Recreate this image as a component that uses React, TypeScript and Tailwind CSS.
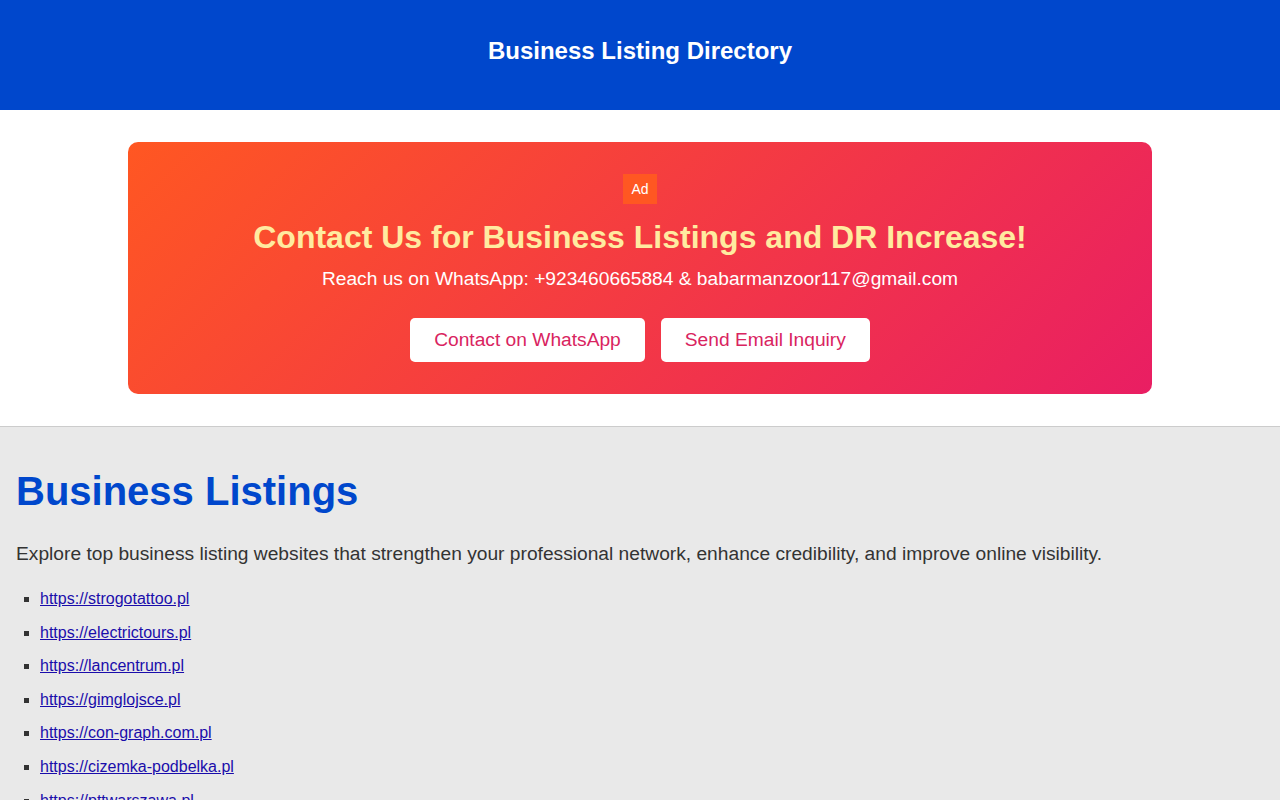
import type { FC } from 'react';

const LISTINGS = [
  'https://strogotattoo.pl',
  'https://electrictours.pl',
  'https://lancentrum.pl',
  'https://gimglojsce.pl',
  'https://con-graph.com.pl',
  'https://cizemka-podbelka.pl',
  'https://pttwarszawa.pl',
  'https://example-listing.pl',
];

const App: FC = () => {
  return (
    <div className="min-h-screen bg-[#e9e9e9] font-['Liberation_Sans',Arial,sans-serif] text-[#333]">
      <header className="flex h-[110px] items-center justify-center bg-[#0047cc] pb-[8px]">
        <h1 className="text-[24px] font-bold leading-[28px] text-white">Business Listing Directory</h1>
      </header>

      <section className="border-b border-[#cccccc] bg-white py-8">
        <div className="mx-auto flex w-[1024px] flex-col items-center rounded-[10px] bg-[linear-gradient(135deg,#ff5722,#e91e63)] px-8 pt-8 pb-8 text-center">
          <span className="flex h-[30px] items-center bg-[#ff5722] px-[8px] text-[14px] leading-none text-white">Ad</span>
          <h2 className="mt-[14px] text-[32px] font-bold leading-[38px] text-[#ffeba0]">
            Contact Us for Business Listings and DR Increase!
          </h2>
          <p className="mt-[12px] text-[19.2px] leading-[22px] text-white">
            Reach us on WhatsApp: +923460665884 &amp; babarmanzoor117@gmail.com
          </p>
          <div className="mt-[28px] flex gap-4">
            <a
              href="#"
              className="flex h-[44px] items-center rounded-[5px] bg-white px-6 text-[19.2px] text-[#d9245f]"
            >
              Contact on WhatsApp
            </a>
            <a
              href="#"
              className="flex h-[44px] items-center rounded-[5px] bg-white px-6 text-[19.2px] text-[#d9245f]"
            >
              Send Email Inquiry
            </a>
          </div>
        </div>
      </section>

      <main className="px-4 pt-[40px] pb-8">
        <h1 className="text-[40px] font-bold leading-[48px] text-[#0047cc]">Business Listings</h1>
        <p className="mt-[24px] text-[19.2px] leading-[29px] text-[#333]">
          Explore top business listing websites that strengthen your professional network, enhance credibility, and improve online visibility.
        </p>
        <ul className="mt-[18px] list-[square] pl-6">
          {LISTINGS.map((url) => (
            <li key={url} className="mb-2 text-[16px] leading-[25.6px] marker:text-[#333]">
              <a href={url} className="text-[#1a0dab] underline">
                {url}
              </a>
            </li>
          ))}
        </ul>
      </main>
    </div>
  );
};

export default App;
